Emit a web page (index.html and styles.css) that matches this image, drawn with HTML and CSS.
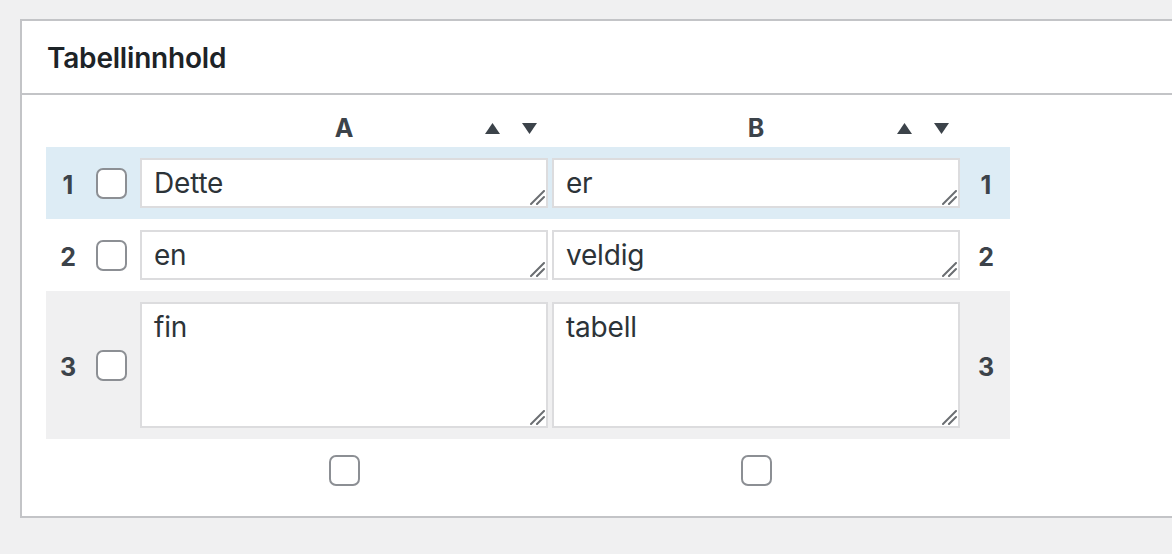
FILE: index.html
```html
<!DOCTYPE html>
<html lang="nb">
<head>
<meta charset="utf-8">
<title>Tabellinnhold</title>
<link rel="stylesheet" href="styles.css">
</head>
<body>
<div class="postbox">
  <h2 class="postbox-title">Tabellinnhold</h2>
  <div class="inside">
    <div class="grid head">
      <div></div>
      <div></div>
      <div class="colhead">
        <span class="letter">A</span>
        <span class="sort">
          <svg class="tri" viewBox="0 0 15 11"><polygon points="7.5,0 15,11 0,11"/></svg>
          <svg class="tri" viewBox="0 0 15 11"><polygon points="0,0 15,0 7.5,11"/></svg>
        </span>
      </div>
      <div class="colhead">
        <span class="letter">B</span>
        <span class="sort">
          <svg class="tri" viewBox="0 0 15 11"><polygon points="7.5,0 15,11 0,11"/></svg>
          <svg class="tri" viewBox="0 0 15 11"><polygon points="0,0 15,0 7.5,11"/></svg>
        </span>
      </div>
      <div></div>
    </div>

    <div class="grid row row-selected">
      <div class="num">1</div>
      <div class="cb"><input type="checkbox" class="check"></div>
      <div class="cell"><div class="ta-wrap"><textarea class="ta">Dette</textarea><svg class="grip" viewBox="0 0 15 15"><line x1="1" y1="14" x2="14" y2="1"/><line x1="7" y1="14" x2="14" y2="7"/></svg></div></div>
      <div class="cell"><div class="ta-wrap"><textarea class="ta">er</textarea><svg class="grip" viewBox="0 0 15 15"><line x1="1" y1="14" x2="14" y2="1"/><line x1="7" y1="14" x2="14" y2="7"/></svg></div></div>
      <div class="num">1</div>
    </div>

    <div class="grid row">
      <div class="num">2</div>
      <div class="cb"><input type="checkbox" class="check"></div>
      <div class="cell"><div class="ta-wrap"><textarea class="ta">en</textarea><svg class="grip" viewBox="0 0 15 15"><line x1="1" y1="14" x2="14" y2="1"/><line x1="7" y1="14" x2="14" y2="7"/></svg></div></div>
      <div class="cell"><div class="ta-wrap"><textarea class="ta">veldig</textarea><svg class="grip" viewBox="0 0 15 15"><line x1="1" y1="14" x2="14" y2="1"/><line x1="7" y1="14" x2="14" y2="7"/></svg></div></div>
      <div class="num">2</div>
    </div>

    <div class="grid row row-alt">
      <div class="num">3</div>
      <div class="cb"><input type="checkbox" class="check"></div>
      <div class="cell"><div class="ta-wrap"><textarea class="ta ta-tall">fin</textarea><svg class="grip" viewBox="0 0 15 15"><line x1="1" y1="14" x2="14" y2="1"/><line x1="7" y1="14" x2="14" y2="7"/></svg></div></div>
      <div class="cell"><div class="ta-wrap"><textarea class="ta ta-tall">tabell</textarea><svg class="grip" viewBox="0 0 15 15"><line x1="1" y1="14" x2="14" y2="1"/><line x1="7" y1="14" x2="14" y2="7"/></svg></div></div>
      <div class="num">3</div>
    </div>

    <div class="grid foot">
      <div></div>
      <div></div>
      <div class="foot-cell"><input type="checkbox" class="check"></div>
      <div class="foot-cell"><input type="checkbox" class="check"></div>
      <div></div>
    </div>
  </div>
</div>
</body>
</html>
```

FILE: styles.css
```css
html, body {
  margin: 0;
  padding: 0;
  overflow: hidden;
  background: #f0f0f1;
}

body {
  font-family: Inter, "Noto Sans", "Liberation Sans", sans-serif;
  color: #2c3338;
}

.postbox {
  margin: 19px 0 0 20px;
  width: 1200px;
  background: #fff;
  border: 2px solid #c3c4c7;
  box-sizing: border-box;
}

.postbox-title {
  margin: 0;
  padding: 23px 25px 21px;
  font-size: 28px;
  line-height: 28px;
  font-weight: 600;
  letter-spacing: -0.2px;
  color: #1d2327;
  border-bottom: 2px solid #c3c4c7;
}

.inside {
  padding: 0 0 30px 24px;
}

.grid {
  display: grid;
  grid-template-columns: 44px 48px 412px 412px 48px;
  width: 964px;
  align-items: center;
}

.head {
  padding: 20px 0 6px;
  line-height: 26px;
}

.colhead {
  display: grid;
  grid-template-columns: 1fr auto 1fr;
  align-items: center;
}

.letter {
  grid-column: 2;
  font-size: 25px;
  font-weight: 700;
  color: #3c434a;
}

.sort {
  grid-column: 3;
  justify-self: end;
  display: flex;
  gap: 22px;
  padding-right: 13px;
}

.tri {
  display: block;
  width: 15px;
  height: 11px;
  fill: #3c434a;
}

.row {
  padding: 11px 0;
}

.row-selected {
  background: #ddecf5;
}

.row-alt {
  background: #f0f0f1;
}

.num {
  text-align: center;
  font-size: 25px;
  font-weight: 700;
  color: #3c434a;
  line-height: 26px;
  padding-top: 3px;
}

.cb {
  padding-left: 6px;
  display: flex;
}

.check {
  appearance: none;
  -webkit-appearance: none;
  display: block;
  margin: 0;
  width: 31px;
  height: 31px;
  box-sizing: border-box;
  border: 2px solid #8c8f94;
  border-radius: 7px;
  background: #fff;
}

.cell {
  padding: 0 2px;
}

.ta-wrap {
  position: relative;
}

.ta {
  display: block;
  width: 408px;
  height: 50px;
  margin: 0;
  box-sizing: border-box;
  border: 2px solid #dcdcde;
  border-radius: 0;
  padding: 3px 12px;
  font-family: Inter, "Noto Sans", "Liberation Sans", sans-serif;
  font-size: 28px;
  line-height: 40px;
  letter-spacing: -0.2px;
  color: #2c3338;
  background: #fff;
  resize: none;
  overflow: hidden;
  outline: none;
}

.ta-tall {
  height: 126px;
}

.grip {
  position: absolute;
  right: 3px;
  bottom: 3px;
  width: 15px;
  height: 15px;
  stroke: #6b6e72;
  stroke-width: 2;
  stroke-linecap: round;
}

.foot {
  padding-top: 16px;
}

.foot-cell {
  display: flex;
  justify-content: center;
}
```
